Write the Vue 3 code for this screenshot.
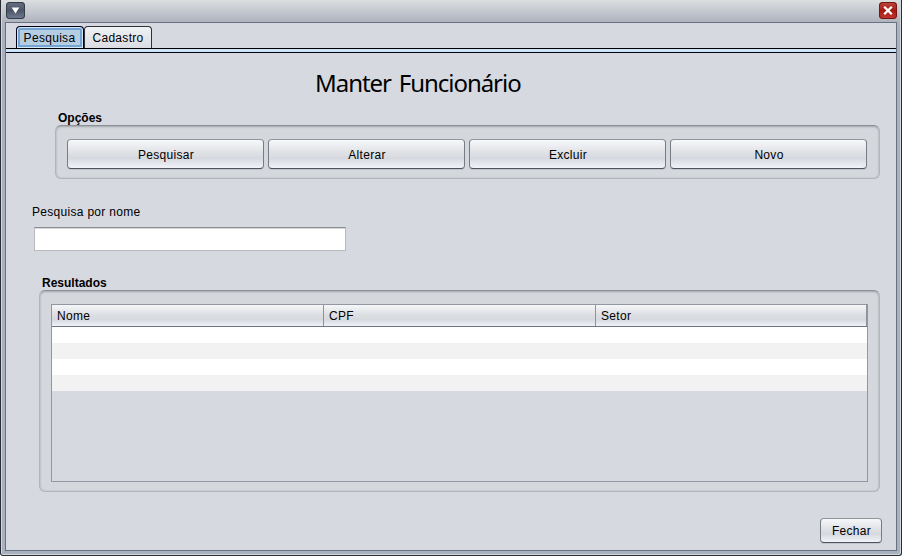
<script setup>
const options = ['Pesquisar', 'Alterar', 'Excluir', 'Novo']
const columns = ['Nome', 'CPF', 'Setor']
</script>

<template>
  <div class="window">
    <header class="titlebar">
      <button class="win-btn menu" aria-label="Menu">
        <svg width="19" height="17" viewBox="0 0 19 17"><path d="M5.7 5.5H13.3L9.5 11.5Z" fill="#fff" /></svg>
      </button>
      <button class="win-btn close" aria-label="Fechar janela">
        <svg width="18" height="17" viewBox="0 0 18 17"><path d="M5.2 4.7L12.8 12.3M12.8 4.7L5.2 12.3" stroke="#fff" stroke-width="2.3" /></svg>
      </button>
    </header>
    <main class="content">
      <nav class="tabs">
        <div class="tab active"><span>Pesquisa</span></div>
        <div class="tab"><span>Cadastro</span></div>
      </nav>
      <div class="tab-line"></div>
      <h1><span>Manter Funcionário</span></h1>
      <h2 class="options-title">Opções</h2>
      <section class="group options">
        <button v-for="o in options" :key="o" class="btn">{{ o }}</button>
      </section>
      <label class="field-label" for="nome">Pesquisa por nome</label>
      <input id="nome" class="field" type="text" />
      <h2 class="results-title">Resultados</h2>
      <section class="group results">
        <div class="table">
          <div class="head">
            <div v-for="c in columns" :key="c" class="cell">{{ c }}</div>
          </div>
          <div v-for="n in 4" :key="n" class="row"></div>
        </div>
      </section>
      <footer><button class="btn close-form">Fechar</button></footer>
    </main>
  </div>
</template>

<style>
body { background: #fff; overflow: hidden; }
</style>

<style scoped>
* { box-sizing: border-box; margin: 0; }
.window {
  width: 902px; height: 556px; padding: 0 4px 4px;
  border: solid #2b2d36; border-width: 0 1px 1px;
  border-radius: 0 0 3px 3px;
  background: linear-gradient(#dcdee0, #b0b5bf 21px, #a9b0be 30px);
  box-shadow: inset 1px 0 #d3d6da, inset -1px -1px #d3d6da;
  font: 12px/14px "Liberation Sans", Arial, sans-serif;
  letter-spacing: 0.3px; color: #000;
}
.titlebar { height: 22px; padding: 2px 0 0 1px; display: flex; justify-content: space-between; align-items: flex-start; }
.win-btn { padding: 0; border: 0; border-radius: 4px; display: flex; }
.menu { width: 19px; height: 17px; background: linear-gradient(#687182, #4d5667 50%, #747f93); box-shadow: inset 0 0 0 1px #353b49; }
.close { width: 18px; height: 17px; background: linear-gradient(#bd4a43, #a51b12 50%, #c43b30); box-shadow: inset 0 0 0 1px #751611; }
.content {
  width: 892px; height: 529px; background: #d6d9e0;
  border: 1px solid #687181; display: flex; flex-direction: column;
}
.tabs { height: 25px; padding: 3px 0 0 10px; display: flex; flex: none; }
.tab {
  width: 68px; height: 22px; border: 1px solid #30323a; border-bottom: 0;
  border-radius: 4px 4px 0 0; display: flex; align-items: center; justify-content: center;
  background: linear-gradient(#f0f1f4, #dadce2);
}
.tab.active { width: 68px; padding-right: 1px; border-color: #000018; background: #b4cde3; box-shadow: inset 0 0 0 1px #d2e6f6, inset 0 0 0 3px #73a4d1; }
.tab-line { height: 5px; flex: none; border-top: 1px solid #000; border-bottom: 1px solid #000018; background: #cde4f6; }
h1 { margin: 15px 0 0 309px; height: 30px; font: 24px/30px "Noto Sans", "DejaVu Sans", sans-serif; letter-spacing: -1.03px; word-spacing: 2.5px; white-space: nowrap; flex: none; }
h2 { font: bold 12px/14px "Liberation Sans", Arial, sans-serif; letter-spacing: 0; flex: none; }
.options-title { margin: 13px 0 0 52px; }
.group {
  flex: none; border: 1px solid #b1b4b9; border-top-color: #8d9095; border-radius: 6px;
  background: #d4d7dc; box-shadow: inset 0 1px 2px #a4a7ac, inset 0 0 2px #bdc0c5;
}
.options { width: 825px; height: 54px; margin: 0 0 0 49px; padding: 13px 11px; display: flex; gap: 4px; }
.btn {
  border: 1px solid #7b8088; border-color: #92969c #777c84 #4e525d; border-radius: 4px; padding: 1px 0 0 1px;
  background: linear-gradient(#f7f8fa, #dfe1e5 45%, #d6d9df 65%, #f1f3f8);
  box-shadow: 0 1px #c1c5cc; color: #000; font: inherit; letter-spacing: inherit;
}
.options .btn { width: 197px; height: 30px; }
.field-label { margin: 26px 0 0 26px; flex: none; align-self: flex-start; }
.field { width: 312px; height: 24px; margin: 8px 0 0 28px; flex: none; border: 1px solid #b8babd; border-top-color: #8d8e91; background: #fff; box-shadow: inset 0 1px #d5d6d8; border-radius: 0; outline: 0; }
.results-title { margin: 25px 0 0 36px; }
.results { width: 841px; height: 202px; margin-left: 33px; padding: 13px 11px; }
.table { width: 817px; height: 178px; border: 1px solid #9297a1; background: #d6d9e0; }
.head { height: 22px; display: grid; grid-template-columns: 272px 272px 1fr; border-bottom: 1px solid #6d7482; background: linear-gradient(#f6f7f9, #dddfe3 45%, #d6d9de 70%, #eff2f6); }
.cell { padding: 4px 0 0 5px; border-right: 1px solid #8e939a; }
.row { height: 16px; background: #fff; }
.row:nth-child(odd) { background: #f2f2f2; }
footer { padding: 26px 14px 0 0; display: flex; justify-content: flex-end; }
.close-form { width: 62px; height: 25px; }
</style>
